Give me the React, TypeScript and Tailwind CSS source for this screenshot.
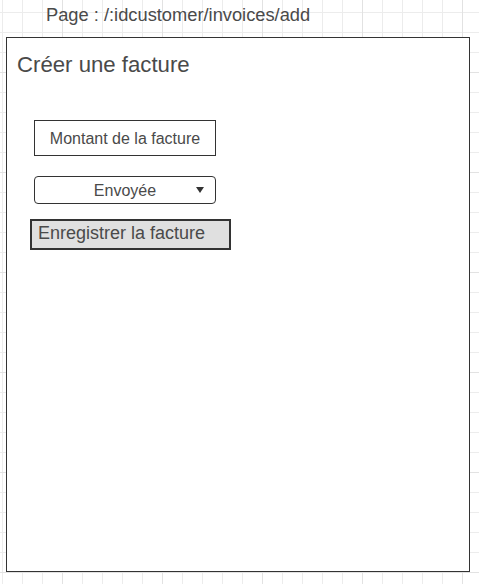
export default function App() {
  return (
    <div
      className="min-h-[584px] w-full bg-white bg-[linear-gradient(to_right,#e2e2e2_1px,transparent_1px),linear-gradient(to_bottom,#e2e2e2_1px,transparent_1px),linear-gradient(to_right,#ececec_1px,transparent_1px),linear-gradient(to_bottom,#ececec_1px,transparent_1px)] bg-[size:100px_100px,100px_100px,20px_20px,20px_20px] bg-[position:62px_72px,62px_72px,2px_12px,2px_12px] font-['Liberation_Sans',Arial,sans-serif] text-[#4a4a4a]"
    >
      {/* route label */}
      <div className="h-[37px] pl-[46px] pt-[4px] text-[18.3px] leading-[21px]">
        Page : /:idcustomer/invoices/add
      </div>

      {/* page frame */}
      <div className="ml-[6px] flex h-[535px] w-[464px] flex-col items-start border border-[#333] bg-white">
        <h1 className="mt-[14px] pl-[10px] text-[22.2px] leading-[26px]">Créer une facture</h1>

        <div className="ml-[27px] mt-[42px] flex h-[36px] w-[182px] items-center justify-center border border-[#333] text-[16px] leading-[19px]">
          Montant de la facture
        </div>

        <div className="relative ml-[27px] mt-[20px] flex h-[28px] w-[182px] items-center justify-center rounded-[4px] border border-[#333] text-[16px] leading-[19px]">
          Envoyée
          <svg className="absolute right-[11px] top-[10px]" width="8" height="6" viewBox="0 0 8 6">
            <path d="M0 0h8L4 6z" fill="#333" />
          </svg>
        </div>

        <div className="ml-[23px] mt-[15px] h-[31px] w-[201px] border-2 border-[#333] bg-[#e0e0e0] pl-[6px] pt-[2px] text-[18px] leading-[21px]">
          Enregistrer la facture
        </div>
      </div>
    </div>
  );
}
